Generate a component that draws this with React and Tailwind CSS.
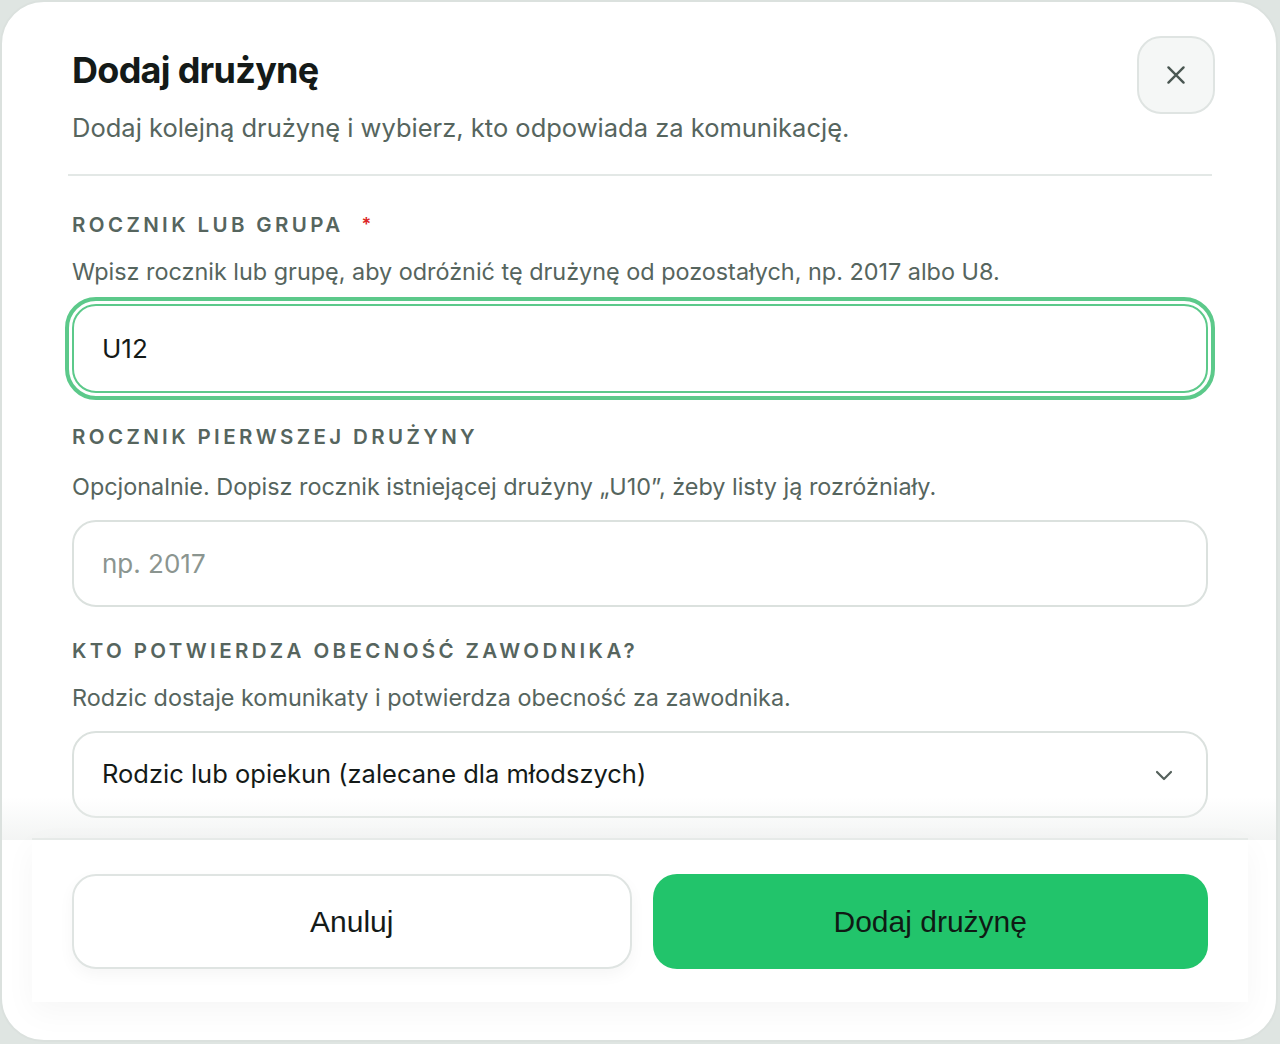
import React, { useState } from 'react';

const font = { fontFamily: 'Inter, "Noto Sans", sans-serif' };

const Label = ({ children, required }) => (
  <div className="flex items-center gap-[18px] text-[20.5px] leading-[28px] font-semibold uppercase tracking-[0.165em] text-[#56655e]">
    <span>{children}</span>
    {required && <span className="text-[#dc2626] text-[18px]">*</span>}
  </div>
);

const Helper = ({ children, className = 'mt-[17px]' }) => (
  <p className={`${className} text-[23.4px] leading-[32px] text-[#56655e]`}>{children}</p>
);

export default function App() {
  const [group, setGroup] = useState('U12');
  const [firstYear, setFirstYear] = useState('');

  return (
    <div className="h-[1044px] w-[1280px] bg-[#dfe5e2]" style={font}>
      <div className="relative h-[1042px] w-[1278px] rounded-[44px] border-2 border-[#dbe1de] bg-white overflow-hidden">
        <div className="pl-[70px] pr-[68px] pt-[46px]">
          <div className="flex items-start justify-between">
            <div>
              <h1 className="text-[36px] leading-[44px] font-bold tracking-[-0.02em] text-[#141a18]">Dodaj drużynę</h1>
              <p className="mt-[19px] text-[25.5px] leading-[34px] text-[#56655e]">
                Dodaj kolejną drużynę i wybierz, kto odpowiada za komunikację.
              </p>
            </div>
            <button className="-mr-[7px] -mt-[12px] flex h-[78px] w-[78px] items-center justify-center rounded-[24px] border-2 border-[#dfe4e2] bg-[#f5f7f6]">
              <svg width="26" height="26" viewBox="0 0 24 24" fill="none" stroke="#4a5752" strokeWidth="2.2" strokeLinecap="round">
                <path d="M5 5l14 14M19 5L5 19" />
              </svg>
            </button>
          </div>
        </div>

        <div className="ml-[66px] mr-[64px] mt-[29px] h-[2px] bg-[#e3e8e6]" />

        <div className="pl-[70px] pr-[68px] pt-[35px]">
          <Label required>Rocznik lub grupa</Label>
          <Helper>Wpisz rocznik lub grupę, aby odróżnić tę drużynę od pozostałych, np. 2017 albo U8.</Helper>
          <div className="-mx-[7px] mt-[9px] rounded-[31px] border-[4px] border-[#5cc98a] p-[3px]">
            <input
              value={group}
              onChange={(e) => setGroup(e.target.value)}
              className="h-[89px] w-full rounded-[24px] border-2 border-[#5cc98a] bg-white px-[28px] text-[26px] text-[#141a18] outline-none"
              style={font}
            />
          </div>

          <div className="mt-[23px]">
            <Label>Rocznik pierwszej drużyny</Label>
          </div>
          <Helper className="mt-[20px]">Opcjonalnie. Dopisz rocznik istniejącej drużyny „U10”, żeby listy ją rozróżniały.</Helper>
          <input
            value={firstYear}
            onChange={(e) => setFirstYear(e.target.value)}
            placeholder="np. 2017"
            className="mt-[17px] h-[87px] w-full rounded-[24px] border-2 border-[#dbe1de] bg-white px-[28px] text-[26px] text-[#141a18] placeholder:text-[#8b9590] outline-none"
            style={font}
          />

          <div className="mt-[30px]">
            <Label>Kto potwierdza obecność zawodnika?</Label>
          </div>
          <Helper>Rodzic dostaje komunikaty i potwierdza obecność za zawodnika.</Helper>
          <div className="mt-[17px] flex h-[87px] w-full items-center justify-between rounded-[24px] border-2 border-[#dbe1de] bg-white pl-[28px] pr-[30px]">
            <span className="text-[25.5px] text-[#141a18]">Rodzic lub opiekun (zalecane dla młodszych)</span>
            <svg width="24" height="24" viewBox="0 0 24 24" fill="none" stroke="#55615c" strokeWidth="2.2" strokeLinecap="round" strokeLinejoin="round">
              <path d="M5 9l7 7 7-7" />
            </svg>
          </div>
        </div>

        <div className="absolute left-0 right-0 top-[795px] h-[43px] bg-gradient-to-b from-transparent to-[#f0f2f1] opacity-80" />

        <div className="absolute left-[30px] right-[28px] top-[836px] h-[164px] border-t-2 border-[#e6eae8] bg-white px-[40px] pt-[34px] shadow-[0_10px_30px_rgba(0,0,0,0.04)]">
          <div className="flex gap-[21px]" style={{ fontFamily: '"Liberation Sans", Arial, sans-serif' }}>
            <button className="h-[95px] flex-1 rounded-[24px] border-2 border-[#dfe4e2] bg-white text-[30px] text-[#141a18] shadow-[0_6px_16px_rgba(0,0,0,0.04)]">
              Anuluj
            </button>
            <button className="h-[95px] flex-1 rounded-[24px] bg-[#22c46b] text-[30px] text-[#0f1a14]">
              Dodaj drużynę
            </button>
          </div>
        </div>
      </div>
    </div>
  );
}
